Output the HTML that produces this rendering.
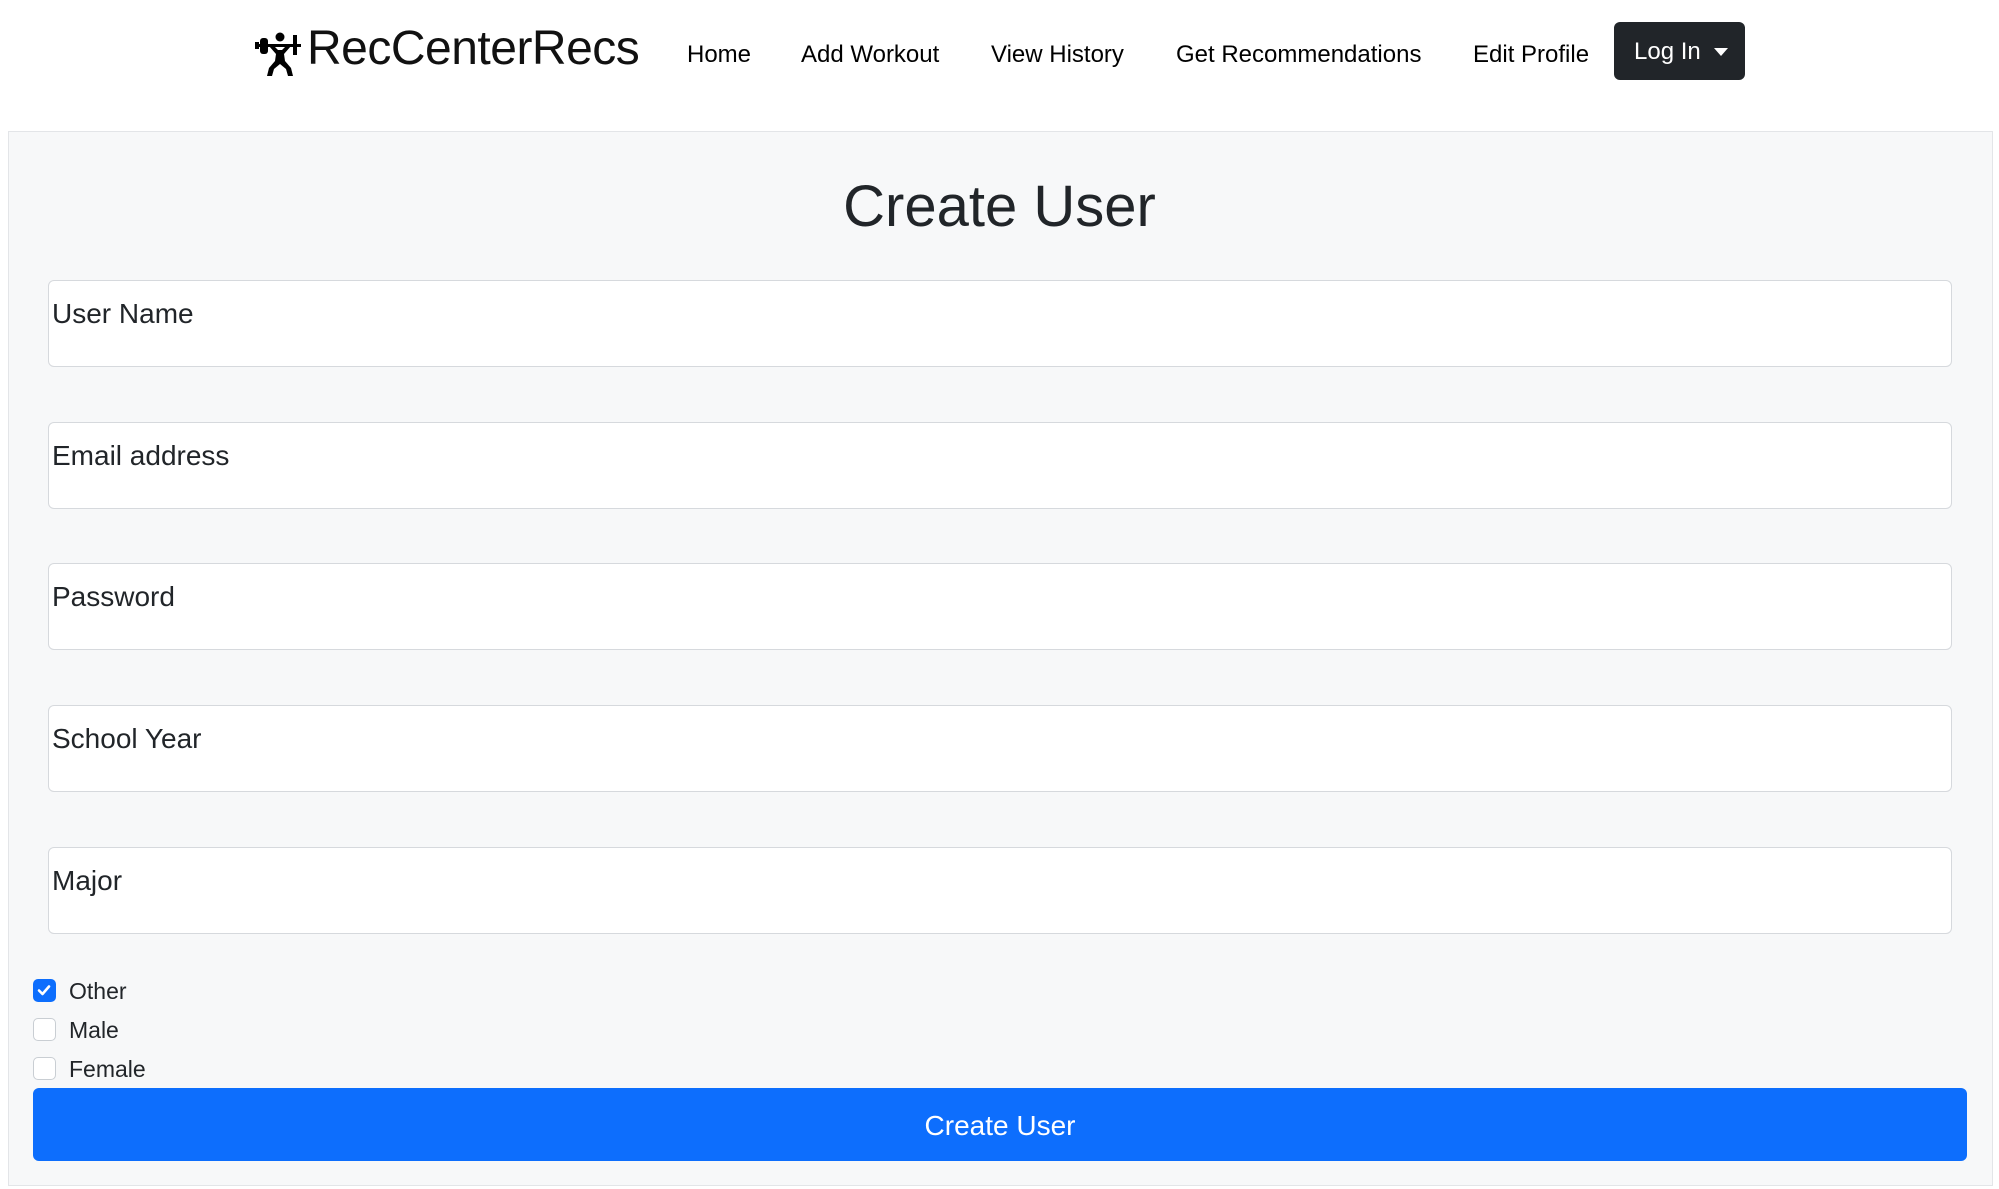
<!DOCTYPE html>
<html><head><meta charset="utf-8">
<style>
*{box-sizing:border-box;margin:0;padding:0}
html,body{width:1999px;height:1189px;background:#fff;font-family:"Liberation Sans",sans-serif;color:#212529;overflow:hidden;position:relative}
.abs{position:absolute}
.nav{font-size:24px;top:41px;color:#000;white-space:nowrap}
.logo{left:307px;top:21px;font-size:48px;color:#111;letter-spacing:-0.5px}
.btn{left:1614px;top:22px;width:131px;height:58px;background:#212529;border-radius:6px;color:#fff;font-size:24px;line-height:60px;padding-left:20px}
.btn:after{content:"";position:absolute;left:100px;top:26px;border-left:7px solid transparent;border-right:7px solid transparent;border-top:8px solid #fff}
.panel{left:8px;top:131px;width:1985px;height:1055px;background:#f7f8f9;border:1px solid #e3e5e8}
.title{left:0;width:1999px;text-align:center;top:173px;font-size:58px;color:#212529}
.inp{left:48px;width:1904px;height:87px;background:#fff;border:1.5px solid #d6d9dd;border-radius:6px}
.inp span{position:absolute;left:3px;top:17px;font-size:28px;color:#212529}
.cb{left:33px;width:23px;height:23px;border:1.5px solid #c9ced3;border-radius:5px;background:#fff}
.cb.on{background:#0d6efd;border-color:#0d6efd}
.lbl{left:69px;font-size:23px;color:#212529}
.sub{left:33px;top:1088px;width:1934px;height:73px;background:#0d6efd;border-radius:6px;color:#fff;font-size:28px;text-align:center;line-height:76px}
</style></head><body>
<svg class="abs" style="left:255px;top:28px" width="52" height="50" viewBox="0 0 52 50">
<rect x="2" y="16" width="44" height="3" fill="#000"/>
<rect x="5" y="10" width="8" height="16" rx="3" fill="#000"/>
<rect x="38" y="7" width="4" height="20" fill="#000"/>
<rect x="0" y="14" width="4" height="7" fill="#000"/>
<circle cx="25" cy="9" r="4.5" fill="#000"/>
<path d="M14 18 L21 26 L20 33 L14 40 L12 48 L17 48 L19 41 L25 36 L31 41 L33 48 L38 48 L36 40 L30 33 L29 26 L36 18 L33 16 L27 22 L23 22 L17 16 Z" fill="#000"/>
</svg>
<div class="abs logo">RecCenterRecs</div>
<div class="abs nav" style="left:687px">Home</div>
<div class="abs nav" style="left:801px">Add Workout</div>
<div class="abs nav" style="left:991px">View History</div>
<div class="abs nav" style="left:1176px">Get Recommendations</div>
<div class="abs nav" style="left:1473px">Edit Profile</div>
<div class="abs btn">Log In</div>
<div class="abs panel"></div>
<div class="abs title">Create User</div>
<div class="abs inp" style="top:280px"><span>User Name</span></div>
<div class="abs inp" style="top:422px"><span>Email address</span></div>
<div class="abs inp" style="top:563px"><span>Password</span></div>
<div class="abs inp" style="top:705px"><span>School Year</span></div>
<div class="abs inp" style="top:847px"><span>Major</span></div>
<div class="abs cb on" style="top:979px"><svg width="20" height="20" viewBox="0 0 20 20" style="position:absolute;left:0;top:0"><path d="M5 10.5 L8.5 14 L15 6.5" stroke="#fff" stroke-width="2.6" fill="none" stroke-linecap="round" stroke-linejoin="round"/></svg></div>
<div class="abs lbl" style="top:978px">Other</div>
<div class="abs cb" style="top:1018px"></div>
<div class="abs lbl" style="top:1017px">Male</div>
<div class="abs cb" style="top:1057px"></div>
<div class="abs lbl" style="top:1056px">Female</div>
<div class="abs sub">Create User</div>
</body></html>
